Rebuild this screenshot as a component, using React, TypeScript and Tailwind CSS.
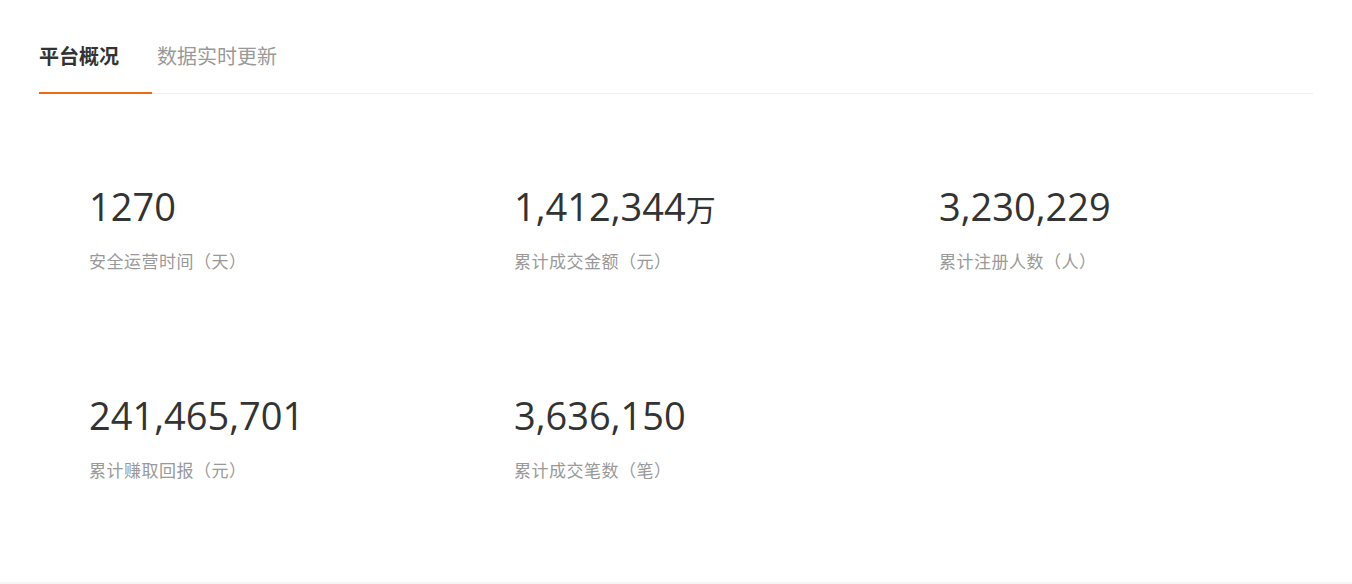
const stats = [
  { value: "1270", unit: "", label: "安全运营时间（天）" },
  { value: "1,412,344", unit: "万", label: "累计成交金额（元）" },
  { value: "3,230,229", unit: "", label: "累计注册人数（人）" },
  { value: "241,465,701", unit: "", label: "累计赚取回报（元）" },
  { value: "3,636,150", unit: "", label: "累计成交笔数（笔）" },
];

export default function App() {
  return (
    <div
      className="min-h-[584px] bg-[#f5f5f5]"
      style={{ fontFamily: '"Open Sans", "Noto Sans CJK SC", sans-serif' }}
    >
      <section className="h-[582px] bg-white px-[39px]">
        {/* Tabs */}
        <div className="flex border-b border-[#eeeeee] pt-[44px]">
          <div className="-mb-px w-[113px] border-b-2 border-[#f26a10] pb-[22px] text-[20px] leading-[26px] font-bold text-[#333333]">
            平台概况
          </div>
          <div className="ml-[5px] pb-[22px] text-[20px] leading-[26px] text-[#999999]">
            数据实时更新
          </div>
        </div>

        {/* Stats */}
        <div className="grid grid-cols-[425px_425px_425px] gap-y-[117px] pl-[50px] pt-[88px]">
          {stats.map((s) => (
            <div key={s.label} className="flex flex-col gap-[20px]">
              <div className="h-[48px] text-[38px] leading-[48px] text-[#333333]">
                {s.value}
                {s.unit && <span className="text-[30px] leading-none">{s.unit}</span>}
              </div>
              <div className="text-[17px] leading-[24px] tracking-[0.5px] text-[#999999]">
                {s.label}
              </div>
            </div>
          ))}
        </div>
      </section>
    </div>
  );
}
